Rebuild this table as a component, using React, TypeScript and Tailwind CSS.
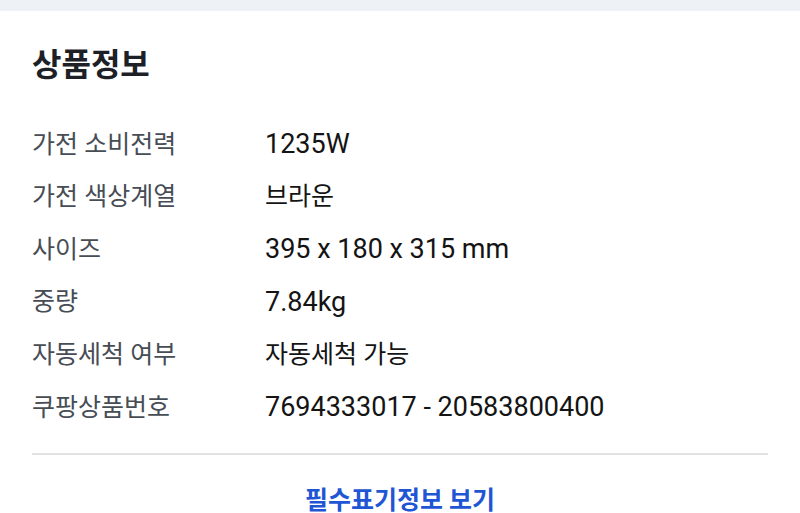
const rows: [string, string, boolean][] = [
  ["가전 소비전력", "1235W", false],
  ["가전 색상계열", "브라운", true],
  ["사이즈", "395 x 180 x 315 mm", false],
  ["중량", "7.84kg", false],
  ["자동세척 여부", "자동세척 가능", true],
  ["쿠팡상품번호", "7694333017 - 20583800400", false],
];

export default function App() {
  return (
    <div
      className="h-[513px] w-[800px] overflow-hidden bg-white"
      style={{ fontFamily: 'Roboto, "Noto Sans CJK KR", sans-serif' }}
    >
      <div className="h-[11px] bg-[#eef2f6]" />
      <div className="px-8">
        <h2 className="pt-[35px] text-[32px] font-bold leading-[38px] text-[#1d2127]">상품정보</h2>
        <div className="mt-[34px] flex flex-col">
          {rows.map(([label, value, hangul]) => (
            <div key={label} className="flex h-[52.6px] items-center">
              <div className="w-[233px] shrink-0 text-[25px] text-[#474d55]">{label}</div>
              <div className={hangul ? "text-[25px] text-[#141414]" : "text-[27px] text-[#141414]"}>{value}</div>
            </div>
          ))}
        </div>
        <div className="mt-[19px] h-[2px] bg-[#e2e2e2]" />
        <div className="flex justify-center pt-[32px]">
          <button className="text-[25px] font-bold leading-[28px] text-[#1f56d4]">필수표기정보 보기</button>
        </div>
      </div>
    </div>
  );
}
